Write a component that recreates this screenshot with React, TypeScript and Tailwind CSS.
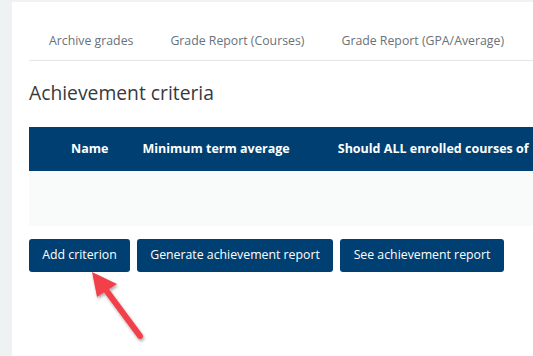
import React from "react";

const tabs = ["Archive grades", "Grade Report (Courses)", "Grade Report (GPA/Average)"];

const App: React.FC = () => {
  return (
    <div
      className="relative w-[533px] h-[356px] overflow-hidden bg-[#eff2f3] pl-[12px] pt-[2px]"
      style={{ fontFamily: "'Open Sans', 'Liberation Sans', sans-serif" }}
    >
      <div className="bg-white h-full pl-[17px] pt-[26px]">
        {/* Tabs */}
        <div className="flex border-b border-[#e4e6e8] h-[33px] pl-[20px] text-[12.3px] text-[#69717a] whitespace-nowrap">
          {tabs.map((t) => (
            <a key={t} href="#" className="mr-[37px] leading-[26px]">
              {t}
            </a>
          ))}
        </div>

        <h2 className="mt-[19px] text-[19.3px] leading-[26px] text-[#373a3c] whitespace-nowrap">
          Achievement criteria
        </h2>

        {/* Table */}
        <div className="mt-[21px]">
          <div className="flex items-center h-[44px] bg-[#003f72] text-white font-bold text-[12.5px] whitespace-nowrap overflow-hidden">
            <span className="ml-[42px]">Name</span>
            <span className="ml-[34px]">Minimum term average</span>
            <span className="ml-[48px]">Should ALL enrolled courses of</span>
          </div>
          <div className="h-[55px] bg-[#f9fafa]" />
        </div>

        {/* Buttons */}
        <div className="flex gap-[7px] mt-[13px] text-[12.3px] text-white whitespace-nowrap">
          <button className="h-[33px] w-[101px] rounded-[3px] bg-[#003f72]">Add criterion</button>
          <button className="h-[33px] w-[196px] rounded-[3px] bg-[#003f72]">Generate achievement report</button>
          <button className="h-[33px] w-[164px] rounded-[3px] bg-[#003f72]">See achievement report</button>
        </div>
      </div>

      {/* Annotation arrow */}
      <svg className="absolute left-0 top-0" width="533" height="356" viewBox="0 0 533 356">
        <defs>
          <filter id="sh" x="-20%" y="-20%" width="140%" height="140%">
            <feDropShadow dx="1" dy="2" stdDeviation="1.5" floodColor="#000" floodOpacity="0.35" />
          </filter>
        </defs>
        <g filter="url(#sh)">
          <line x1="140" y1="336" x2="103" y2="286" stroke="#f2404c" strokeWidth="6" strokeLinecap="round" />
          <polygon points="92,272 117,284 97,297" fill="#f2404c" />
        </g>
      </svg>
    </div>
  );
};

export default App;
